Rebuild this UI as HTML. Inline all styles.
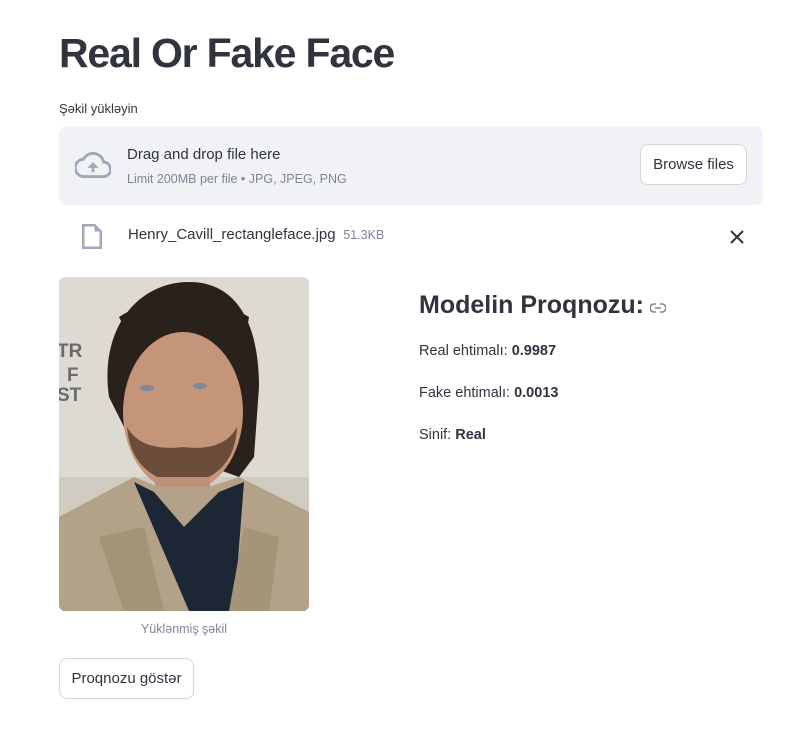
<!DOCTYPE html>
<html><head><meta charset="utf-8"><style>
body{margin:0;background:#fff;font-family:"Liberation Sans",sans-serif;color:#31333f;width:810px;height:742px;overflow:hidden;position:relative}
.a{position:absolute}
h1{position:absolute;left:59px;top:30px;margin:0;font-size:41px;font-weight:700;letter-spacing:-1.2px}
.lbl{left:59px;top:101px;font-size:13px}
.drop{left:59px;top:126px;width:704px;height:79px;background:#f0f2f6;border-radius:8px}
.btn{background:#fff;border:1px solid #d6d6d9;border-radius:8px;font-size:15px;display:flex;align-items:center;justify-content:center}
</style></head><body>
<h1>Real Or Fake Face</h1>
<div class="a lbl">Şəkil yükləyin</div>
<div class="a drop">
<svg class="a" style="left:16px;top:26px" width="36" height="26" viewBox="0 0 24 18"><path d="M19.4 7A7.5 7.5 0 0 0 5.4 5 6 6 0 0 0 6 17h13a5 5 0 0 0 .4-10z" fill="none" stroke="#a3a8b8" stroke-width="2"/><path d="M12 7l-4 4h3v3h2v-3h3z" fill="#a3a8b8"/></svg>
<div class="a" style="left:68px;top:20px;font-size:15px">Drag and drop file here</div>
<div class="a" style="left:68px;top:46px;font-size:12.5px;color:#808495">Limit 200MB per file • JPG, JPEG, PNG</div>
<div class="a btn" style="left:581px;top:18px;width:105px;height:39px">Browse files</div>
</div>
<svg class="a" style="left:82px;top:224px" width="20" height="25" viewBox="0 0 16 20"><path d="M1 1h9l5 5v13H1z" fill="none" stroke="#a3a8b8" stroke-width="2"/><path d="M10 1v5h5z" fill="#a3a8b8"/></svg>
<div class="a" style="left:128px;top:226px;font-size:15px">Henry_Cavill_rectangleface.jpg <span style="font-size:12.5px;color:#808495">&nbsp;51.3KB</span></div>
<svg class="a" style="left:730px;top:230px" width="14" height="14" viewBox="0 0 14 14"><path d="M1 1L13 13M13 1L1 13" stroke="#31333f" stroke-width="2"/></svg>
<svg class="a" style="left:59px;top:277px;border-radius:6px" width="250" height="334" viewBox="0 0 250 334">
<rect width="250" height="334" fill="#dcdad2"/>
<rect x="0" y="200" width="250" height="134" fill="#cfcbc0"/>
<text x="-2" y="80" font-size="19" font-weight="700" fill="#6a6a66" font-family="Liberation Sans">TR</text>
<text x="8" y="104" font-size="19" font-weight="700" fill="#6a6a66" font-family="Liberation Sans">F</text>
<text x="-2" y="124" font-size="19" font-weight="700" fill="#6a6a66" font-family="Liberation Sans">ST</text>
<path d="M50 120C40 50 80 5 130 5S200 50 200 110L195 180 180 200 70 160z" fill="#2a211c"/>
<ellipse cx="124" cy="135" rx="60" ry="80" fill="#c49579"/>
<path d="M68 150Q72 200 124 208Q176 200 178 150Q165 175 124 170Q82 175 68 150z" fill="#6b4c3a"/>
<path d="M70 60Q124 25 185 70L190 40Q124 0 60 40z" fill="#2a211c"/>
<path d="M95 200L150 200 155 240 100 240z" fill="#bf9278"/>
<path d="M0 240L75 200 100 210 150 210 180 200 250 235V334H0z" fill="#b3a287"/>
<path d="M75 205L130 334H175L185 205 160 215 125 250 95 215z" fill="#1d2635"/>
<path d="M40 260L85 250 105 334H65z" fill="#a69478"/><path d="M220 260L185 250 170 334H210z" fill="#a69478"/>
<ellipse cx="88" cy="111" rx="7" ry="3" fill="#7b8a99"/><ellipse cx="141" cy="109" rx="7" ry="3" fill="#7b8a99"/>
</svg>
<div class="a" style="left:59px;top:622px;width:250px;text-align:center;font-size:12.5px;color:#808495">Yüklənmiş şəkil</div>
<div class="a btn" style="left:59px;top:658px;width:133px;height:39px">Proqnozu göstər</div>
<div class="a" style="left:419px;top:291px;font-size:25px;font-weight:700">Modelin Proqnozu:</div>
<svg class="a" style="left:650px;top:303px" width="16" height="10" viewBox="0 0 16 10"><path d="M6 1H4a4 4 0 0 0 0 8h2M10 1h2a4 4 0 0 1 0 8h-2M5 5h6" fill="none" stroke="#808495" stroke-width="1.6"/></svg>
<div class="a" style="left:419px;top:343px;font-size:14.5px">Real ehtimalı: <b>0.9987</b></div>
<div class="a" style="left:419px;top:385px;font-size:14.5px">Fake ehtimalı: <b>0.0013</b></div>
<div class="a" style="left:419px;top:427px;font-size:14.5px">Sinif: <b>Real</b></div>
</body></html>
